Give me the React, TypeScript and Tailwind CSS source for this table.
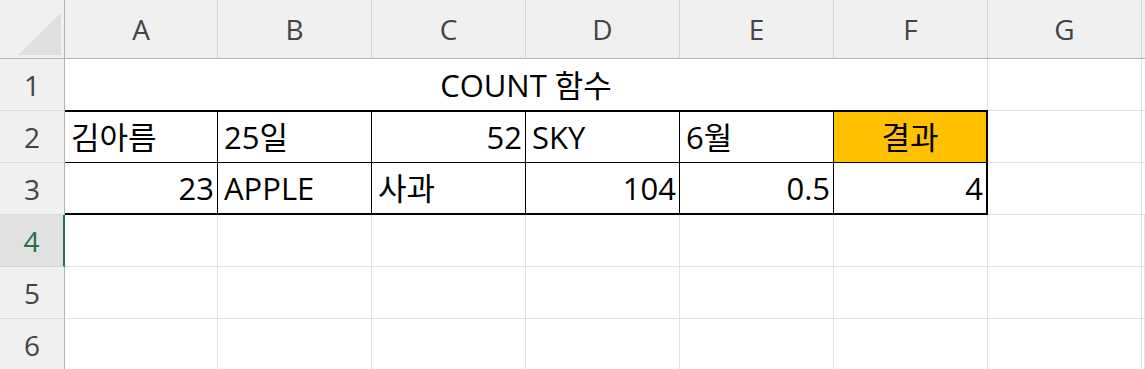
const cols = ['A', 'B', 'C', 'D', 'E', 'F', 'G'];

type Cell = { v: string; right?: boolean; center?: boolean; fill?: boolean };

const table: Cell[][] = [
  [{ v: '김아름' }, { v: '25일' }, { v: '52', right: true }, { v: 'SKY' }, { v: '6월' }, { v: '결과', center: true, fill: true }],
  [{ v: '23', right: true }, { v: 'APPLE' }, { v: '사과' }, { v: '104', right: true }, { v: '0.5', right: true }, { v: '4', right: true }],
];

const font = "font-['Open_Sans','Noto_Sans_CJK_KR',sans-serif]";

const Blank = ({ row }: { row: number }) => (
  <>
    {Array.from({ length: 8 }).map((_, i) => (
      <div key={`${row}-${i}`} className="border-r border-b border-[#e1e1e1] bg-white" />
    ))}
  </>
);

const RowHead = ({ n, active }: { n: number; active?: boolean }) => (
  <div
    className={`flex items-center justify-center border-b text-[28px] leading-none ${
      active
        ? 'bg-[#e1e1e1] text-[#217346] border-r-2 border-r-[#217346] border-b-[#d4d4d4]'
        : 'bg-[#f0f0f0] text-[#444] border-r border-r-[#b4b4b4] border-b-[#dcdcdc]'
    }`}
  >
    {n}
  </div>
);

export default function App() {
  return (
    <div className={`w-[1145px] h-[369px] overflow-hidden bg-white ${font}`}>
      <div className="grid grid-cols-[65px_153px_repeat(6,154px)_1fr] grid-rows-[59px_repeat(6,52px)]">
        {/* corner */}
        <div className="relative bg-[#f0f0f0] border-r border-b border-[#b4b4b4]">
          <svg className="absolute left-0 top-0" width="64" height="58">
            <polygon points="61,13 61,55 18,55" fill="#dfdfdf" />
          </svg>
        </div>
        {cols.map((c) => (
          <div
            key={c}
            className="flex items-center justify-center bg-[#f0f0f0] border-r border-r-[#d4d4d4] border-b border-b-[#b4b4b4] text-[28px] leading-none text-[#444]"
          >
            {c}
          </div>
        ))}
        <div className="bg-[#f0f0f0] border-b border-b-[#b4b4b4]" />

        {/* row 1 */}
        <RowHead n={1} />
        <div className="col-span-6 flex items-end justify-center pb-[10px] border-r border-[#e1e1e1] text-[31px] leading-none text-black">
          COUNT 함수
        </div>
        <div className="border-r border-b border-[#e1e1e1]" />
        <div className="border-b border-[#e1e1e1]" />

        {/* rows 2-3 */}
        <RowHead n={2} />
        <div className="col-span-6 row-span-2 -mt-px border-t-2 border-r-2 border-b-2 border-black grid grid-cols-[153px_repeat(4,154px)_1fr] grid-rows-2">
          {table.map((row, r) =>
            row.map((cell, i) => (
              <div
                key={`${r}-${i}`}
                className={`flex items-end pb-[9px] text-[31px] leading-none text-black ${
                  i < 5 ? 'border-r border-black' : ''
                } ${r === 0 ? 'border-b border-black' : ''} ${
                  cell.right ? 'justify-end pr-[3px]' : cell.center ? 'justify-center' : 'justify-start pl-[6px]'
                } ${cell.fill ? 'bg-[#ffc000]' : 'bg-white'}`}
              >
                {cell.v}
              </div>
            ))
          )}
        </div>
        <div className="border-r border-b border-[#e1e1e1]" />
        <div className="border-b border-[#e1e1e1]" />
        <RowHead n={3} />
        <div className="border-r border-b border-[#e1e1e1]" />
        <div className="border-b border-[#e1e1e1]" />

        {/* rows 4-6 */}
        <RowHead n={4} active />
        <Blank row={4} />
        <RowHead n={5} />
        <Blank row={5} />
        <RowHead n={6} />
        <Blank row={6} />
      </div>
    </div>
  );
}
